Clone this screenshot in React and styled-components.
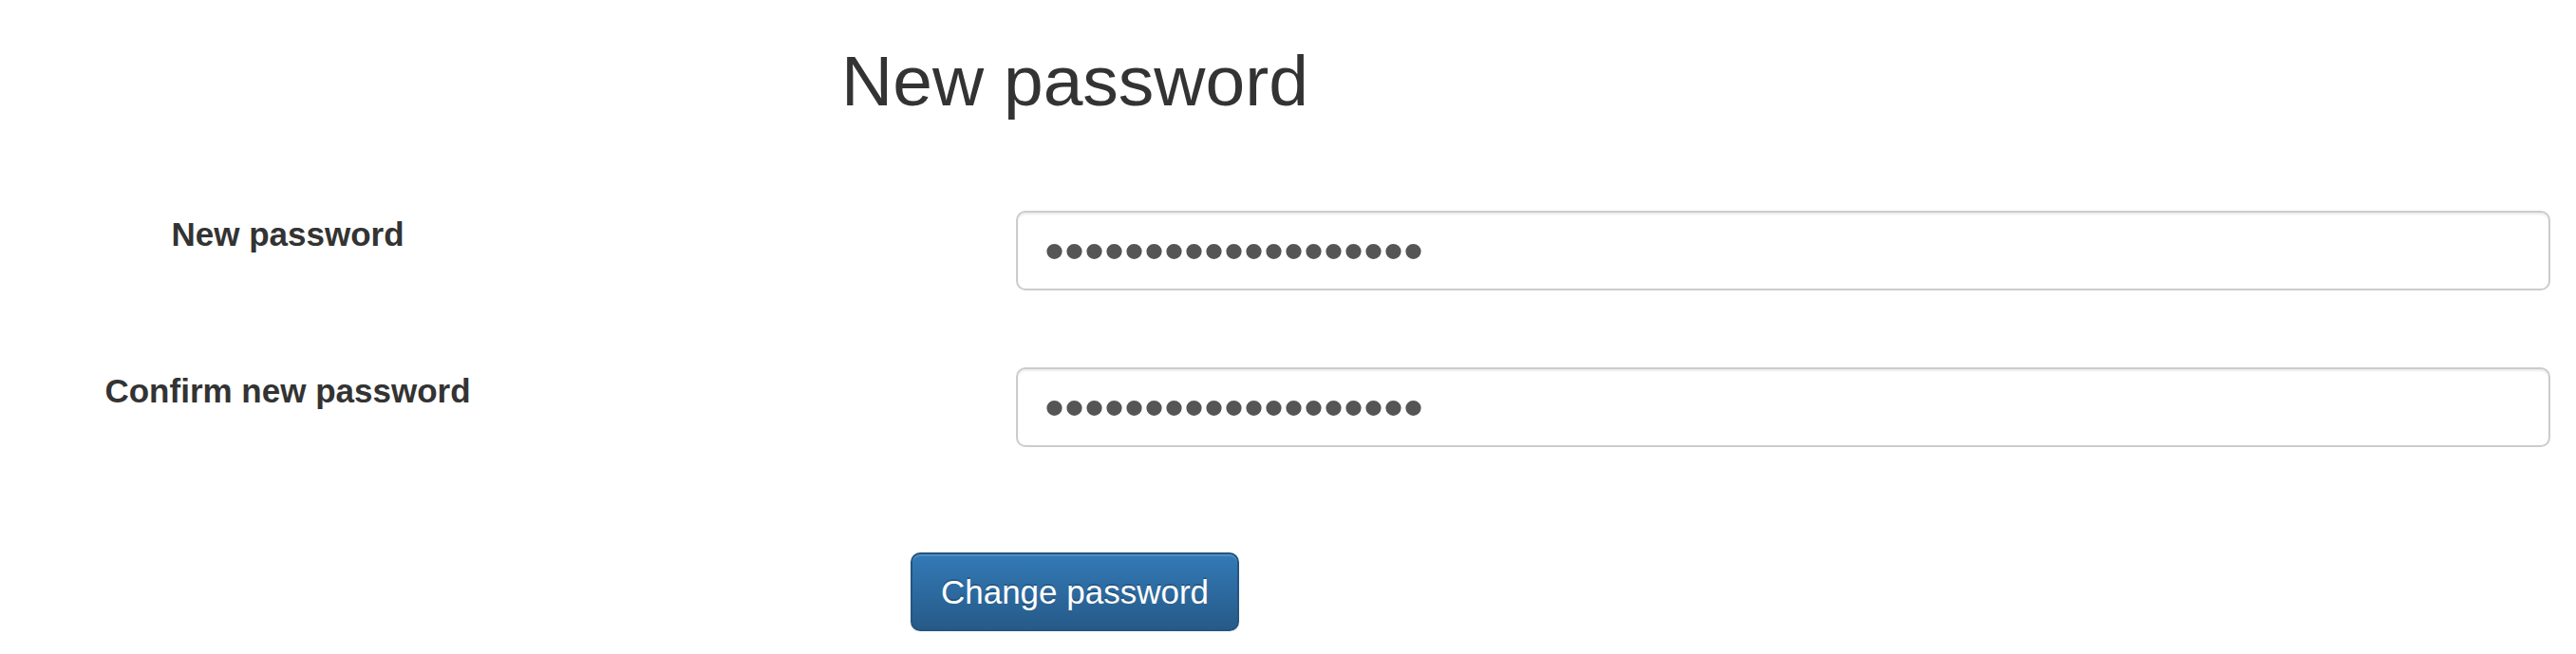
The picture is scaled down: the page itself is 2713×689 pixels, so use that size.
import React from "react";
import styled, { createGlobalStyle } from "styled-components";

const GlobalStyle = createGlobalStyle`
  html, body {
    margin: 0;
    padding: 0;
    background: #fff;
  }
  body {
    font-family: "Liberation Sans", Arial, Helvetica, sans-serif;
    color: #333;
  }
`;

const Page = styled.div`
  padding-top: 44px;
  width: 2713px;
`;

const Title = styled.h2`
  width: 2264px;
  margin: 0 0 95px;
  font-size: 75px;
  line-height: 83px;
  font-weight: 400;
  text-align: center;
  color: #333;
`;

const Form = styled.form`
  display: flex;
  flex-direction: column;
  gap: 81px;
`;

const FormGroup = styled.div`
  display: grid;
  grid-template-columns: 606px 1616px;
  column-gap: 464px;
  align-items: start;
`;

const Label = styled.label`
  font-size: 35px;
  line-height: 50px;
  font-weight: 700;
  text-align: center;
  color: #333;
`;

const PasswordInput = styled.input`
  box-sizing: border-box;
  width: 100%;
  height: 84px;
  padding: 0 28px;
  border: 2px solid #ccc;
  border-radius: 10px;
  box-shadow: inset 0 2px 2px rgba(0, 0, 0, 0.075);
  background: #fff;
  color: #555;
  font-family: "Liberation Sans", Arial, sans-serif;
  font-size: 60px;
  outline: none;
`;

const Actions = styled.div`
  width: 2264px;
  display: flex;
  justify-content: center;
  margin-top: 111px;
`;

const PrimaryButton = styled.button`
  box-sizing: border-box;
  height: 83px;
  padding: 0 30px;
  border: 2px solid #245580;
  border-radius: 10px;
  background: linear-gradient(to bottom, #337ab7 0%, #265a88 100%);
  box-shadow: inset 0 2px 0 rgba(255, 255, 255, 0.15), 0 2px 2px rgba(0, 0, 0, 0.075);
  color: #fff;
  font-family: "Liberation Sans", Arial, sans-serif;
  font-size: 35px;
  text-shadow: 0 -2px 0 rgba(0, 0, 0, 0.2);
  cursor: pointer;
`;

const secret = "abcdefghijklmnopqrs";

export default function App() {
  return (
    <>
      <GlobalStyle />
      <Page>
        <Title>New password</Title>
        <Form onSubmit={e => e.preventDefault()}>
          <FormGroup>
            <Label htmlFor="new-password">New password</Label>
            <PasswordInput id="new-password" type="password" defaultValue={secret} />
          </FormGroup>
          <FormGroup>
            <Label htmlFor="confirm-password">Confirm new password</Label>
            <PasswordInput id="confirm-password" type="password" defaultValue={secret} />
          </FormGroup>
        </Form>
        <Actions>
          <PrimaryButton type="button">Change password</PrimaryButton>
        </Actions>
      </Page>
    </>
  );
}
